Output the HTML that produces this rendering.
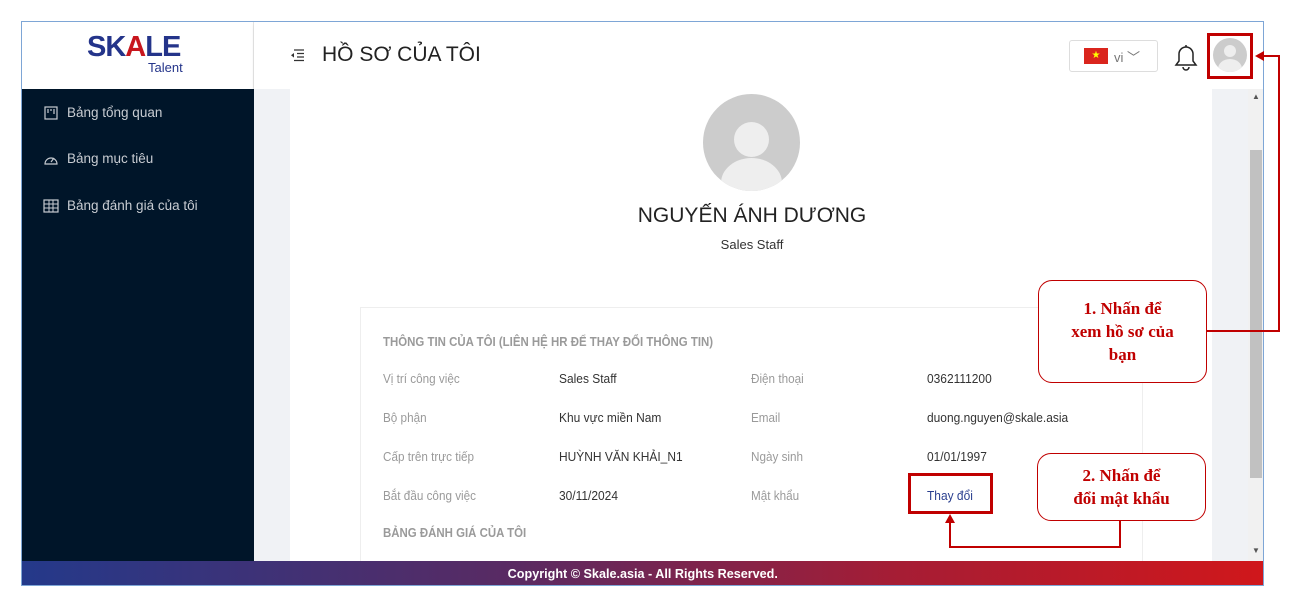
<!DOCTYPE html>
<html><head><meta charset="utf-8"><style>
*{margin:0;padding:0;box-sizing:border-box}
body{width:1292px;height:601px;background:#fff;position:relative;overflow:hidden;font-family:"Liberation Sans",sans-serif}
.a{position:absolute}
.frame{left:21px;top:21px;width:1243px;height:565px;border:1px solid #7ea6d6;overflow:hidden}
.lbl{color:#9a9a9a;font-size:13px;transform:scaleX(.9);transform-origin:left}
.val{color:#333;font-size:13px;transform:scaleX(.92);transform-origin:left}
.h{color:#9a9a9a;font-size:13px;font-weight:bold;transform:scaleX(.88);transform-origin:left}
.side{color:#c8ccd2;font-size:13.5px}
.call{border:1px solid #c00000;border-radius:14px;background:#fff;color:#c00000;font-family:"Liberation Serif",serif;font-weight:bold;font-size:17px;text-align:center;line-height:23px}
</style></head><body>
<div class="a frame">
 <!-- sidebar -->
 <div class="a" style="left:0;top:0;width:232px;height:67px;background:#fff;border-right:1px solid #e6e6e6"></div>
 <div class="a" style="left:65px;top:9px;font-size:29px;font-weight:bold;color:#24348a;letter-spacing:-1px">SK<span style="color:#c8161d">A</span>LE</div>
 <div class="a" style="left:126px;top:38px;font-size:13px;color:#24348a">Talent</div>
 <div class="a" style="left:0;top:67px;width:232px;height:472px;background:#001529"></div>
 <svg class="a" style="left:22px;top:84px" width="14" height="14" viewBox="0 0 14 14"><rect x="1" y="1" width="12" height="12" fill="none" stroke="#c8ccd2" stroke-width="1.2"/><path d="M4 3v4M7 3v2M10 3v5" stroke="#c8ccd2" stroke-width="1.2"/></svg>
 <div class="a side" style="left:45px;top:83px">Bảng tổng quan</div>
 <svg class="a" style="left:21px;top:130px" width="16" height="14" viewBox="0 0 16 14"><path d="M2 12a6 6 0 1 1 12 0z" fill="none" stroke="#c8ccd2" stroke-width="1.2"/><path d="M8 10l3-4" stroke="#c8ccd2" stroke-width="1.2"/></svg>
 <div class="a side" style="left:45px;top:129px">Bảng mục tiêu</div>
 <svg class="a" style="left:21px;top:177px" width="16" height="14" viewBox="0 0 16 14"><rect x="1" y="1" width="14" height="12" fill="none" stroke="#c8ccd2" stroke-width="1.2"/><path d="M1 5h14M1 9h14M6 1v12M10 1v12" stroke="#c8ccd2" stroke-width="1"/></svg>
 <div class="a side" style="left:45px;top:176px">Bảng đánh giá của tôi</div>
 <!-- header -->
 <div class="a" style="left:232px;top:0;width:1010px;height:67px;background:#fff;box-shadow:0 2px 4px rgba(0,0,0,.08)"></div>
 <svg class="a" style="left:267px;top:26px" width="16" height="14" viewBox="0 0 16 14"><path d="M5 2h10M8 5.5h7M8 9h7M5 12.5h10" stroke="#333" stroke-width="1.3"/><path d="M5 5l-3 2.3 3 2.3z" fill="#333"/></svg>
 <div class="a" style="left:300px;top:21px;font-size:21px;color:#222">HỒ SƠ CỦA TÔI</div>
 <div class="a" style="left:1047px;top:18px;width:89px;height:32px;border:1px solid #ddd;border-radius:3px"></div>
 <div class="a" style="left:1062px;top:26px;width:24px;height:16px;background:#da251d;color:#ff0;font-size:10px;text-align:center;line-height:16px">★</div>
 <div class="a" style="left:1092px;top:25px;font-size:13px;color:#777">vi ﹀</div>
 <svg class="a" style="left:1150px;top:20px" width="28" height="30" viewBox="0 0 28 30"><path d="M4 23h20l-3-4v-7a7 7 0 0 0-14 0v7z M11 25a3 3 0 0 0 6 0" fill="none" stroke="#222" stroke-width="1.5"/><path d="M14 3v2" stroke="#222" stroke-width="1.5"/></svg>
 <div class="a" style="left:1191px;top:16px;width:34px;height:34px;border-radius:50%;background:#ccc;overflow:hidden"><div class="a" style="left:11px;top:7px;width:12px;height:12px;border-radius:50%;background:#eee"></div><div class="a" style="left:5px;top:21px;width:24px;height:20px;border-radius:50%;background:#eee"></div></div>
 <!-- content -->
 <div class="a" style="left:232px;top:67px;width:994px;height:472px;background:#f0f2f5"></div>
 <div class="a" style="left:268px;top:67px;width:922px;height:472px;background:#fff"></div>
 <div class="a" style="left:1226px;top:67px;width:16px;height:472px;background:#f1f1f1"></div>
 <div class="a" style="left:1228px;top:128px;width:12px;height:328px;background:#c1c1c1"></div>
 <div class="a" style="left:1230px;top:70px;font-size:8px;color:#555">▲</div>
 <div class="a" style="left:1230px;top:524px;font-size:8px;color:#555">▼</div>
 <div class="a" style="left:681px;top:72px;width:97px;height:97px;border-radius:50%;background:#ccc;overflow:hidden"><div class="a" style="left:31px;top:28px;width:35px;height:35px;border-radius:50%;background:#eee"></div><div class="a" style="left:18px;top:64px;width:61px;height:50px;border-radius:50%;background:#eee"></div></div>
 <div class="a" style="left:530px;top:182px;width:400px;text-align:center;font-size:21px;color:#222">NGUYẾN ÁNH DƯƠNG</div>
 <div class="a" style="left:530px;top:215px;width:400px;text-align:center;font-size:13px;color:#333">Sales Staff</div>
 <div class="a" style="left:338px;top:285px;width:783px;height:260px;border:1px solid #eee"></div>
 <div class="a h" style="left:361px;top:312px">THÔNG TIN CỦA TÔI (LIÊN HỆ HR ĐỂ THAY ĐỔI THÔNG TIN)</div>
 <div class="a lbl" style="left:361px;top:349px">Vị trí công việc</div><div class="a val" style="left:537px;top:349px">Sales Staff</div>
 <div class="a lbl" style="left:729px;top:349px">Điện thoại</div><div class="a val" style="left:905px;top:349px">0362111200</div>
 <div class="a lbl" style="left:361px;top:388px">Bộ phận</div><div class="a val" style="left:537px;top:388px">Khu vực miền Nam</div>
 <div class="a lbl" style="left:729px;top:388px">Email</div><div class="a val" style="left:905px;top:388px">duong.nguyen@skale.asia</div>
 <div class="a lbl" style="left:361px;top:427px">Cấp trên trực tiếp</div><div class="a val" style="left:537px;top:427px">HUỲNH VĂN KHẢI_N1</div>
 <div class="a lbl" style="left:729px;top:427px">Ngày sinh</div><div class="a val" style="left:905px;top:427px">01/01/1997</div>
 <div class="a lbl" style="left:361px;top:466px">Bắt đầu công việc</div><div class="a val" style="left:537px;top:466px">30/11/2024</div>
 <div class="a lbl" style="left:729px;top:466px">Mật khẩu</div><div class="a val" style="left:905px;top:466px;color:#2a3f8f">Thay đổi</div>
 <div class="a h" style="left:361px;top:503px">BẢNG ĐÁNH GIÁ CỦA TÔI</div>
 <!-- footer -->
 <div class="a" style="left:0;top:539px;width:1242px;height:25px;background:linear-gradient(90deg,#24398a 0%,#5a2a62 40%,#a51d35 70%,#d0171b 100%)"></div>
 <div class="a" style="left:0;top:544px;width:1280px;text-align:center;font-size:13px;font-weight:bold;color:#fff;transform:scaleX(.97);transform-origin:left">Copyright © Skale.asia - All Rights Reserved.</div>
</div>
<!-- annotations -->
<div class="a" style="left:1207px;top:33px;width:46px;height:46px;border:3px solid #c00000"></div>
<div class="a" style="left:908px;top:473px;width:85px;height:41px;border:3px solid #c00000"></div>
<svg class="a" style="left:0;top:0" width="1292" height="601"><g fill="none" stroke="#c00000" stroke-width="2"><path d="M1207 331H1279V56H1262"/><path d="M1120 521V547H950V522"/></g><path d="M1255 56l9-5v10z" fill="#c00000"/><path d="M950 514l-5 9h10z" fill="#c00000"/></svg>
<div class="a call" style="left:1038px;top:280px;width:169px;height:103px;padding-top:16px">1. Nhấn để<br>xem hồ sơ của<br>bạn</div>
<div class="a call" style="left:1037px;top:453px;width:169px;height:68px;padding-top:10px">2. Nhấn để<br>đổi mật khẩu</div>
</body></html>
